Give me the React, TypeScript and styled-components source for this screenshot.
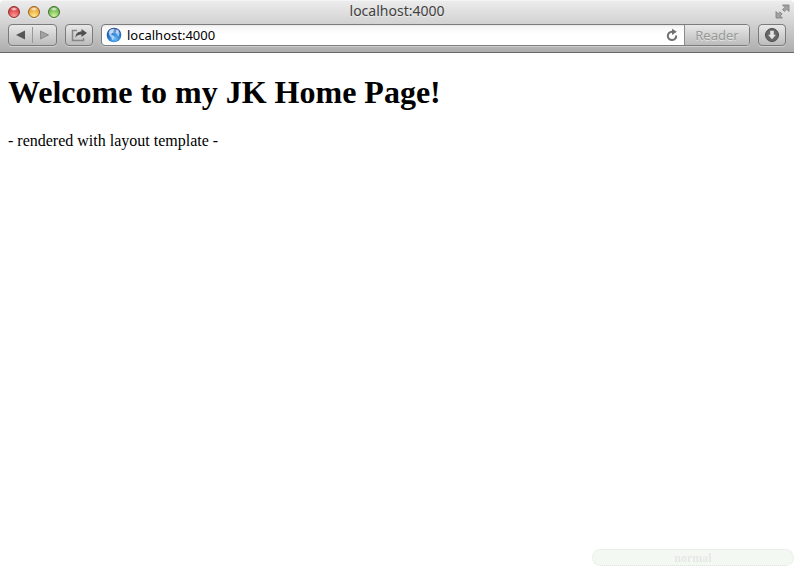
import React from "react";
import styled, { createGlobalStyle } from "styled-components";

const GlobalStyle = createGlobalStyle`
  * { box-sizing: border-box; }
  html, body { margin: 0; background: #fff; }
  button, input { margin: 0; font: inherit; }
`;

const Window = styled.div`
  display: flex;
  flex-direction: column;
  min-height: 100vh;
  font-family: "Liberation Serif", "Times New Roman", serif;
  color: #000;
`;

const Chrome = styled.header`
  font-family: "Noto Sans", "Lucida Grande", sans-serif;
  background: linear-gradient(#ececec, #d2d2d2 44%, #adadad);
  border-top: 1px solid #f4f4f4;
  border-bottom: 1px solid #686868;
  border-radius: 4px 4px 0 0;
`;

const TitleBar = styled.div`
  display: grid;
  grid-template-columns: 1fr auto 1fr;
  align-items: center;
  height: 21px;
  padding: 0 4px;
`;

const Lights = styled.div`
  display: flex;
  gap: 8px;
  padding-left: 4px;
`;

const Light = styled.button<{ $light: string; $mid: string; $dark: string }>`
  width: 12px;
  height: 12px;
  padding: 0;
  border: 1px solid ${(p) => p.$dark};
  border-radius: 50%;
  background:
    radial-gradient(ellipse 4px 2px at 50% 20%, #fffffff0, #ffffff00),
    radial-gradient(circle at 50% 90%, ${(p) => p.$light}, ${(p) => p.$mid} 75%);
  box-shadow: 0 1px 0 #ffffff80;
`;

const Title = styled.div`
  height: 21px;
  font-size: 14px;
  line-height: 20px;
  color: #404040;
  text-shadow: 0 1px 0 #ffffff80;
`;

const FullScreen = styled.button`
  justify-self: end;
  display: flex;
  padding: 0;
  border: 0;
  background: none;
`;

const Toolbar = styled.div`
  display: flex;
  gap: 8px;
  padding: 2px 8px 6px;
`;

const Group = styled.div`
  display: flex;
  align-items: center;
  height: 22px;
  border: 1px solid #7b7b7b;
  border-radius: 4px;
  background: linear-gradient(#e8e8e8, #bcbcbc);
  box-shadow: 0 1px 0 #ffffff60;
`;

const ToolButton = styled.button<{ $width: number; $divided?: boolean }>`
  display: flex;
  align-items: center;
  justify-content: center;
  width: ${(p) => p.$width}px;
  height: 16px;
  padding: 0;
  border: 0;
  border-left: ${(p) => (p.$divided ? "1px solid #999" : "0")};
  background: none;
`;

const AddressBar = styled.form`
  display: flex;
  align-items: center;
  flex: 1;
  min-width: 0;
  height: 22px;
  border: 1px solid #7b7b7b;
  border-radius: 4px;
  overflow: hidden;
  background: linear-gradient(#e9e9e9, #f7f7f7 2px, #fff 10px);
  box-shadow: 0 1px 0 #ffffff60;
`;

const AddressLabel = styled.label`
  display: flex;
  align-items: center;
  flex: 1;
  min-width: 0;
  gap: 5px;
  padding-left: 4px;
`;

const AddressInput = styled.input`
  flex: 1;
  min-width: 0;
  height: 20px;
  padding: 0;
  border: 0;
  outline: 0;
  background: none;
  color: #000;
  font-size: 13px;
`;

const Reader = styled.button`
  align-self: stretch;
  width: 65px;
  padding: 0;
  border: 0;
  border-left: 1px solid #8b8b8b;
  background: linear-gradient(#e8e8e8, #bcbcbc);
  color: #969a98;
  font-size: 13px;
  line-height: 20px;
  text-shadow: 0 1px 0 #ffffff80;
`;

const Page = styled.main`
  flex: 1;
  padding: 0 8px;
`;

const Heading = styled.h1`
  margin: 21px 0;
  font-size: 32px;
  line-height: 37px;
`;

const Text = styled.p`
  margin: 0;
  font-size: 16px;
  line-height: 18px;
`;

const ModeBadge = styled.div`
  position: fixed;
  right: 0;
  bottom: 0;
  width: 202px;
  height: 17px;
  border: 1px dotted #dfe3df;
  border-radius: 9px;
  background: #f3f8f3;
  color: #e6e8e6;
  font-size: 12px;
  font-weight: bold;
  line-height: 16px;
  text-align: center;
`;

const lights = [
  { label: "Close", $light: "#ff9c98", $mid: "#d9353b", $dark: "#8e3032" },
  { label: "Minimize", $light: "#ffe98a", $mid: "#e89e32", $dark: "#93621f" },
  { label: "Zoom", $light: "#cff5a0", $mid: "#65b045", $dark: "#416f2c" },
];

export default function App() {
  return (
    <Window>
      <GlobalStyle />
      <Chrome>
        <TitleBar>
          <Lights>
            {lights.map(({ label, ...colors }) => (
              <Light key={label} type="button" aria-label={label} {...colors} />
            ))}
          </Lights>
          <Title>localhost:4000</Title>
          <FullScreen type="button" aria-label="Enter full screen">
            <svg width="15" height="15" viewBox="0 0 15 15" fill="#a2a2a2" stroke="#7c7c7c" strokeWidth=".8">
              <path d="M7.500 1h6.500v6.500L11.800 5.300 9.500 7.600 7.500 5.600 9.800 3.300z" />
              <path d="M1 7.500l2.200 2.200L5 7.900l2.100 2.100-1.900 1.800L7.400 14H1z" />
            </svg>
          </FullScreen>
        </TitleBar>
        <Toolbar>
          <Group>
            <ToolButton type="button" aria-label="Back" $width={23}>
              <svg width="9" height="10" viewBox="0 0 9 10"><path d="M9 .5v9L0 5z" fill="#555" /></svg>
            </ToolButton>
            <ToolButton type="button" aria-label="Forward" $width={24} $divided>
              <svg width="9" height="10" viewBox="0 0 9 10"><path d="M.5 1v8l8-4z" fill="#a2a2a2" stroke="#7e7e7e" strokeWidth=".8" /></svg>
            </ToolButton>
          </Group>
          <Group>
            <ToolButton type="button" aria-label="Share" $width={26}>
              <svg width="18" height="14" viewBox="0 0 18 14">
                <path d="M7 2.500H2.500v10h11V10" fill="none" stroke="#868686" strokeWidth="1.500" />
                <path d="M5.500 9.500c0-4 2.500-6 6-6V1L17 5l-5.500 4V6.500c-2.800 0-4.500.8-6 3z" fill="#505050" />
              </svg>
            </ToolButton>
          </Group>
          <AddressBar onSubmit={(e) => e.preventDefault()}>
            <AddressLabel>
              <svg width="16" height="16" viewBox="0 0 16 16" aria-hidden="true">
                <defs>
                  <radialGradient id="ocean" cx="55%" cy="75%" r="70%">
                    <stop offset="0" stopColor="#6fc0f6" />
                    <stop offset=".5" stopColor="#2f80d4" />
                    <stop offset="1" stopColor="#1c4596" />
                  </radialGradient>
                </defs>
                <circle cx="8" cy="8" r="7.300" fill="url(#ocean)" />
                <path d="M2.500 5.500C3.500 3.500 5 2.200 7.500 2L8.500 3 7 4l.7 1L6 6.300 5.200 8l2.300.8 1 1.400-1.300 2.600-1.200.2-.5-2.500L3.500 8.500z" fill="#b5dcfa" opacity=".9" />
                <path d="M10 3.200l1.800-.2L13.500 5.500l-.3 3-1.200 1-1-2-1.500-1L10 5z" fill="#a3d0f6" opacity=".9" />
                <ellipse cx="8" cy="4" rx="5" ry="2.500" fill="#fff" opacity=".3" />
              </svg>
              <AddressInput aria-label="Address" defaultValue="localhost:4000" spellCheck={false} />
            </AddressLabel>
            <ToolButton type="button" aria-label="Reload" $width={24}>
              <svg width="12" height="14" viewBox="0 0 12 14">
                <path d="M10.200 7.500A4.200 4.200 0 1 1 6 3.700h1" fill="none" stroke="#707070" strokeWidth="2" />
                <path d="M6 .8l4.800 3L6 7z" fill="#707070" />
              </svg>
            </ToolButton>
            <Reader type="button">Reader</Reader>
          </AddressBar>
          <Group>
            <ToolButton type="button" aria-label="Downloads" $width={26}>
              <svg width="14" height="14" viewBox="0 0 14 14">
                <circle cx="7" cy="7" r="6.500" fill="#666" stroke="#4d4d4d" />
                <path d="M5.200 2.800h3.600v4h2.200L7 11.200 3 6.800h2.200z" fill="#e4e4e4" />
              </svg>
            </ToolButton>
          </Group>
        </Toolbar>
      </Chrome>
      <Page>
        <Heading>Welcome to my JK Home Page!</Heading>
        <Text>- rendered with layout template -</Text>
      </Page>
      <ModeBadge>normal</ModeBadge>
    </Window>
  );
}
